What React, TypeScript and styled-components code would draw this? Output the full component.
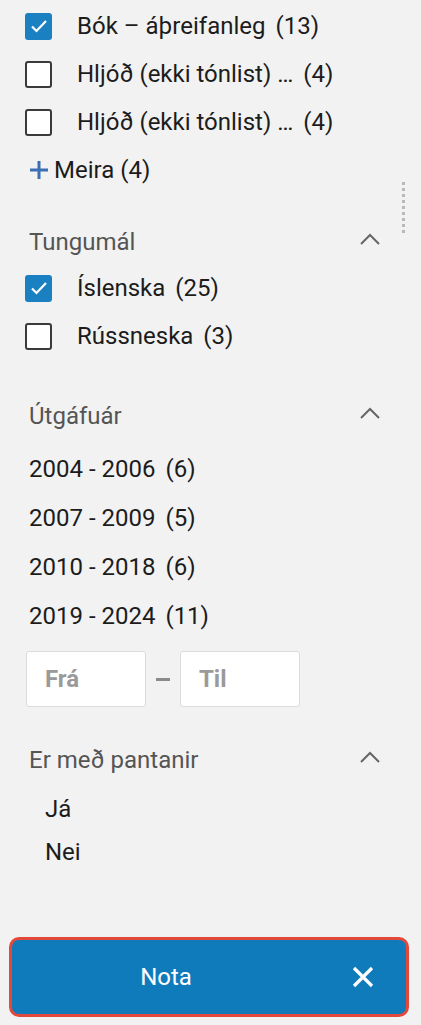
import React from "react"
import styled, { createGlobalStyle } from "styled-components"

const fontStack = `Roboto, "Liberation Sans", sans-serif`

const GlobalStyle = createGlobalStyle`
  html, body {
    margin: 0;
    padding: 0;
    background: #f2f2f2;
  }
  body {
    font-family: ${fontStack};
    color: #1c1c1c;
  }
`

const Panel = styled.div`
  position: relative;
  width: 421px;
  height: 1025px;
  background: #f2f2f2;
  display: flex;
  flex-direction: column;
  overflow: hidden;
`

const Scroller = styled.div`
  flex: 1;
  display: flex;
  flex-direction: column;
  padding: 2px 40px 0 25px;
`

const ScrollHandle = styled.div`
  position: absolute;
  top: 182px;
  right: 16px;
  width: 3px;
  height: 52px;
  background-image: linear-gradient(#b9b9b9 55%, transparent 55%);
  background-size: 3px 6px;
`

interface ISection {
  top: number
}
const Section = styled.section<ISection>`
  display: flex;
  flex-direction: column;
  padding-top: ${props => props.top}px;
`

const SectionHeader = styled.div`
  height: 44px;
  display: flex;
  align-items: center;
  justify-content: space-between;
  padding-left: 4px;
  font-size: 24px;
  color: #555;
`

const Chevron = () => (
  <svg width="22" height="14" viewBox="0 0 22 14" fill="none" style={{ marginTop: -6 }}>
    <path d="M2 12 L11 3 L20 12" stroke="#666" strokeWidth="2" />
  </svg>
)

const Count = styled.span`
  margin-left: 4px;
`

const CheckRow = styled.label`
  height: 48px;
  display: flex;
  align-items: center;
  white-space: pre;
  font-size: 24px;
  color: #1c1c1c;
  cursor: pointer;
`

interface IBox {
  checked?: boolean
}
const Box = styled.span<IBox>`
  width: 27px;
  height: 27px;
  box-sizing: border-box;
  border-radius: 3px;
  border: ${props => (props.checked ? "none" : "2px solid #3a3a3a")};
  background: ${props => (props.checked ? "#1a80c2" : "#fff")};
  display: flex;
  align-items: center;
  justify-content: center;
  margin-right: 25px;
  flex-shrink: 0;
`

const Check = () => (
  <svg width="18" height="14" viewBox="0 0 18 14" fill="none">
    <path d="M2 7.5 L6.5 12 L16 2" stroke="#fff" strokeWidth="2.2" />
  </svg>
)

const Checkbox = ({ label, count, checked }: { label: string; count: number; checked?: boolean }) => (
  <CheckRow>
    <Box checked={checked}>{checked && <Check />}</Box>
    {label} <Count>({count})</Count>
  </CheckRow>
)

const MoreLink = styled.a`
  height: 48px;
  display: flex;
  align-items: center;
  gap: 5px;
  padding-left: 4px;
  font-size: 24px;
  color: #1c1c1c;
`

const Plus = () => (
  <svg width="20" height="20" viewBox="0 0 20 20">
    <path d="M10 1 V19 M1 10 H19" stroke="#3b6fb4" strokeWidth="3" />
  </svg>
)

const YearRow = styled.div`
  height: 49px;
  display: flex;
  align-items: center;
  white-space: pre;
  padding-left: 4px;
  font-size: 24px;
  color: #1c1c1c;
`

const RangeRow = styled.div`
  display: flex;
  align-items: center;
  gap: 10px;
  margin-top: 11px;
  padding-left: 1px;
`

const RangeInput = styled.input`
  width: 120px;
  height: 56px;
  box-sizing: border-box;
  border: 1px solid #dcdcdc;
  border-radius: 3px;
  background: #fff;
  padding: 0 18px;
  font-family: ${fontStack};
  font-size: 24px;
  font-weight: 700;
  outline: none;
  &::placeholder {
    color: #9a9a9a;
  }
`

const Dash = styled.span`
  width: 14px;
  height: 3px;
  background: #8a8a8a;
`

const OptionList = styled.div`
  display: flex;
  flex-direction: column;
  padding-top: 5px;
`

const OptionRow = styled.div`
  height: 43px;
  display: flex;
  align-items: center;
  padding-left: 20px;
  font-size: 24px;
  color: #1c1c1c;
`

const Footer = styled.div`
  padding: 0 12px 8px 9px;
`

const ApplyButton = styled.button`
  width: 100%;
  height: 80px;
  box-sizing: border-box;
  border: 3px solid #e2493b;
  border-radius: 10px;
  background: #0f7bbb;
  display: flex;
  align-items: center;
  padding: 0;
  font-family: ${fontStack};
  color: #fff;
  cursor: pointer;
`

const ButtonLabel = styled.span`
  flex: 1;
  text-align: center;
  font-size: 24px;
`

const CloseArea = styled.span`
  width: 86px;
  display: flex;
  justify-content: center;
`

const CloseIcon = () => (
  <svg width="22" height="22" viewBox="0 0 22 22">
    <path d="M2 2 L20 20 M20 2 L2 20" stroke="#fff" strokeWidth="3.2" />
  </svg>
)

const years = [
  { range: "2004 - 2006", count: 6 },
  { range: "2007 - 2009", count: 5 },
  { range: "2010 - 2018", count: 6 },
  { range: "2019 - 2024", count: 11 },
]

export default function App() {
  return (
    <Panel>
      <GlobalStyle />
      <ScrollHandle />
      <Scroller>
        <Section top={0}>
          <Checkbox label="Bók – áþreifanleg" count={13} checked />
          <Checkbox label="Hljóð (ekki tónlist) …" count={4} />
          <Checkbox label="Hljóð (ekki tónlist) …" count={4} />
          <MoreLink>
            <Plus />
            Meira (4)
          </MoreLink>
        </Section>

        <Section top={26}>
          <SectionHeader>
            Tungumál
            <Chevron />
          </SectionHeader>
          <Checkbox label="Íslenska" count={25} checked />
          <Checkbox label="Rússneska" count={3} />
        </Section>

        <Section top={34}>
          <SectionHeader>
            Útgáfuár
            <Chevron />
          </SectionHeader>
          <div style={{ height: 6 }} />
          {years.map(y => (
            <YearRow key={y.range}>
              {y.range} <Count>({y.count})</Count>
            </YearRow>
          ))}
          <RangeRow>
            <RangeInput placeholder="Frá" />
            <Dash />
            <RangeInput placeholder="Til" />
          </RangeRow>
        </Section>

        <Section top={31}>
          <SectionHeader>
            Er með pantanir
            <Chevron />
          </SectionHeader>
          <OptionList>
            <OptionRow>Já</OptionRow>
            <OptionRow>Nei</OptionRow>
          </OptionList>
        </Section>
      </Scroller>
      <Footer>
        <ApplyButton>
          <ButtonLabel>Nota</ButtonLabel>
          <CloseArea>
            <CloseIcon />
          </CloseArea>
        </ApplyButton>
      </Footer>
    </Panel>
  )
}
